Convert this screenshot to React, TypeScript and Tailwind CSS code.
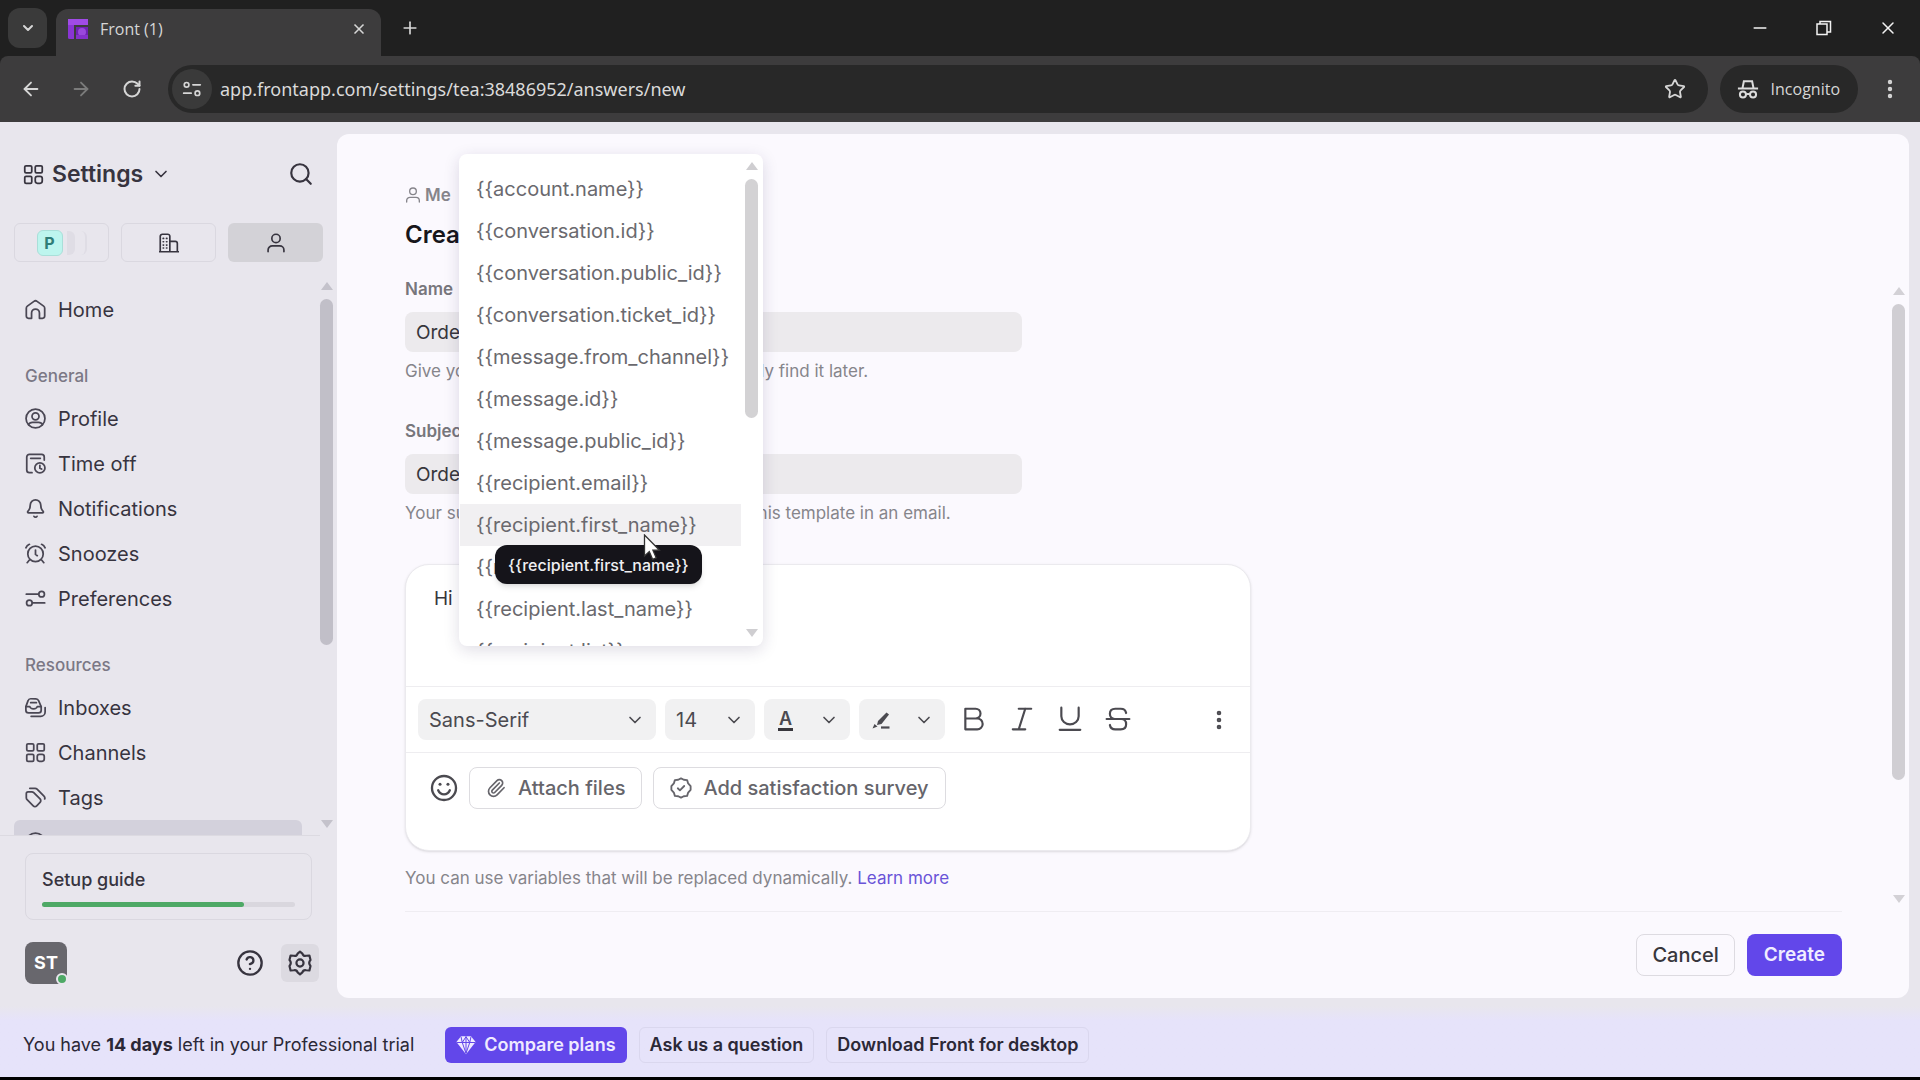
import React from 'react';
import {
  ArrowLeft,
  ArrowRight,
  Bell,
  ChevronDown,
  CircleHelp,
  EllipsisVertical,
  Minus,
  Paperclip,
  Plus,
  RotateCw,
  Search,
  Star,
  X,
} from 'lucide-react';

type IconProps = { className?: string; children?: React.ReactNode };

function Glyph({ className = 'size-6', children }: IconProps) {
  return (
    <svg
      viewBox="0 0 24 24"
      className={`shrink-0 ${className}`}
      fill="none"
      stroke="currentColor"
      strokeWidth="2"
      strokeLinecap="round"
      strokeLinejoin="round"
      aria-hidden="true"
    >
      {children}
    </svg>
  );
}

const GridIcon = ({ className }: IconProps) => (
  <Glyph className={className}>
    <rect x="2" y="2" width="8" height="8" rx="1.5" />
    <rect x="14" y="2" width="8" height="8" rx="1.5" />
    <rect x="2" y="14" width="8" height="8" rx="1.5" />
    <rect x="14" y="14" width="8" height="8" rx="2.5" />
  </Glyph>
);

const HomeIcon = () => (
  <Glyph>
    <path d="M1.500 10.500a3 3 0 0 1 1.200-2.400l7.500-5.400a3 3 0 0 1 3.600 0l7.500 5.400a3 3 0 0 1 1.200 2.400v9a2.500 2.500 0 0 1-2.500 2.500h-3.500v-6a4.500 4.500 0 0 0-9 0v6H4a2.500 2.500 0 0 1-2.500-2.500z" />
  </Glyph>
);

const PersonIcon = ({ className }: IconProps) => (
  <Glyph className={className}>
    <circle cx="12" cy="6.500" r="5" />
    <path d="M2.500 22.500v-2a5 5 0 0 1 5-5h9a5 5 0 0 1 5 5v2" />
  </Glyph>
);

const ProfileIcon = () => (
  <Glyph>
    <circle cx="12" cy="12" r="10.800" />
    <circle cx="12" cy="9.500" r="4" />
    <path d="M4 19c.8-1.700 2.500-2.500 4.500-2.500h7c2 0 3.700.8 4.500 2.500" />
  </Glyph>
);

const TimeOffIcon = () => (
  <Glyph>
    <path d="M8 22.500H5A3 3 0 0 1 2 19.500v-15a3 3 0 0 1 3-3h14a3 3 0 0 1 3 3V8" />
    <path d="M6.500 6h11" />
    <circle cx="17" cy="17" r="5.800" />
    <path d="M17 14v3.300l2 1" />
  </Glyph>
);

const AlarmIcon = () => (
  <Glyph>
    <circle cx="12" cy="12.500" r="8.800" />
    <path d="M12 8v5l2 1.500M1 5.500c.8-1.800 2.200-3.200 4-4M23 5.500c-.8-1.800-2.200-3.200-4-4M5 19.500l-2.500 3M19 19.500l2.500 3" />
  </Glyph>
);

const PreferencesIcon = () => (
  <Glyph>
    <path d="M1.500 7h13.500M9 17h13.500" />
    <circle cx="19" cy="7" r="3.200" />
    <circle cx="5" cy="17" r="3.200" />
  </Glyph>
);

const InboxesIcon = () => (
  <Glyph>
    <path d="M1 11 3.500 4.200A3.200 3.200 0 0 1 6.500 2h6a3.200 3.200 0 0 1 3 2.200L18.500 11v4a3 3 0 0 1-3 3H4a3 3 0 0 1-3-3z" />
    <path d="M1 11h4.500c.5 1.700 1.800 2.500 4.200 2.500s3.800-.8 4.300-2.500h4.500M6.500 6.500h6.500M23 12v5a5 5 0 0 1-5 5H7" />
  </Glyph>
);

const TagsIcon = () => (
  <Glyph>
    <path d="M1.500 7.500v4.700c0 .9.300 1.700.9 2.300l7 7c1.100 1.100 2.900 1.100 4 0l3.800-3.800c1.100-1.100 1.100-2.900 0-4L10 6.500c-.6-.6-1.400-.9-2.200-.9H3.500c-1.100 0-2 .8-2 1.900z" />
    <path d="M5.500 1.500h6c.9 0 1.700.3 2.300.9l7.900 7.900c.9.900 1.200 2.200.8 3.300" />
  </Glyph>
);

const BuildingIcon = ({ className }: IconProps) => (
  <Glyph className={className}>
    <path d="M1.500 22V4A2.500 2.500 0 0 1 4 1.500h6.500A2.500 2.500 0 0 1 13 4v18M.5 22.500h23M13 10h6.500a2.500 2.500 0 0 1 2.500 2.500v10" />
    <path d="M5 6.500h.5M9 6.500h.5M5 10.500h.5M9 10.500h.5M5 14.500h.5M9 14.500h.5M5 18h.5M9 18h.5" />
  </Glyph>
);

const GearIcon = ({ className }: IconProps) => (
  <Glyph className={className}>
    <path d="M9.800 3.300 12 1.500l2.200 1.800c.5 1.700 1.700 2.400 3.500 2l3-.2 1 4.200c-1.600 1.800-1.600 3.600 0 5.400l-1 4.200-3-.2c-1.800-.4-3 .3-3.500 2L12 22.500l-2.200-1.800c-.5-1.700-1.700-2.400-3.500-2l-3 .2-1-4.200c1.600-1.800 1.600-3.600 0-5.400l1-4.200 3 .2c1.800.4 3-.3 3.500-2z" />
    <circle cx="12" cy="12" r="3.300" />
  </Glyph>
);

const SmileIcon = () => (
  <Glyph className="size-7">
    <circle cx="12" cy="12" r="10.300" />
    <path d="M7 14c1 2.300 2.700 3.500 5 3.500s4-1.200 5-3.500" />
    <circle cx="8.600" cy="8.800" r="1.300" fill="currentColor" stroke="none" />
    <circle cx="15.400" cy="8.800" r="1.300" fill="currentColor" stroke="none" />
  </Glyph>
);

const SurveyIcon = () => (
  <Glyph className="size-[22px]">
    <path d="M9 3 12 1.500 15 3l3.700.4 1.100 3.600L22.500 10v4l-2.700 3-1.100 3.600-3.700.4-3 1.500L9 21l-3.700-.4L4.200 17l-2.700-3v-4l2.700-3 1.100-3.600z" />
    <path d="m8.500 12.300 2.300 2.200 4.700-4.700" />
  </Glyph>
);

const DiamondIcon = () => (
  <svg viewBox="0 0 24 24" className="size-5 shrink-0" aria-hidden="true">
    <path d="M6 1.500h12l5.500 7L12 23 .5 8.500z" fill="#efeaff" />
    <path d="M1 9h22M7.500 9 12 22l4.500-13L12 2 7.500 9 6 2M16.500 9 18 2M12 2v20" stroke="#6247ea" strokeWidth="1.200" fill="none" />
  </svg>
);

const FrontLogo = () => (
  <svg viewBox="0 0 20 20" className="size-5 shrink-0" aria-hidden="true">
    <path d="M0 0h20v6H0z" fill="#a04be6" />
    <path d="M0 6h6v14H1.500A1.500 1.500 0 0 1 0 18.500z" fill="#8a35d4" />
    <path d="M8 8h12v12H8z" fill="#6f22b4" />
    <circle cx="14" cy="13" r="4" fill="#9a48dd" />
    <path d="M8 16h12v4H8z" fill="#8531cc" />
  </svg>
);

const TuneIcon = () => (
  <Glyph className="size-5 text-[#d6d6d6]">
    <circle cx="5.500" cy="7" r="2.800" />
    <path d="M13 7h9M2 17h9" />
    <circle cx="18.500" cy="17" r="2.800" />
  </Glyph>
);

const IncognitoIcon = () => (
  <svg viewBox="0 0 24 24" className="size-[22px] shrink-0" aria-hidden="true" fill="none" stroke="#dcdcdc" strokeWidth="2.200">
    <path d="M1 11.500h22M6 11l1.500-7.500h9L18 11" />
    <circle cx="6.500" cy="18" r="3.300" />
    <circle cx="17.500" cy="18" r="3.300" />
    <path d="M10 17.500h4" />
  </svg>
);

const RestoreIcon = () => (
  <svg viewBox="0 0 16 16" className="size-4" fill="none" stroke="#f2f2f2" strokeWidth="1.500" aria-hidden="true">
    <path d="M1 4h10v10.500H1zM4 4V1.500h10.500V12H11" />
  </svg>
);

const PointerIcon = () => (
  <svg viewBox="0 0 18 28" className="h-7 w-[18px]" aria-hidden="true">
    <path d="M1.500 1v21l4.800-4.500 3.300 7.800 3.600-1.500-3.300-7.600h6.600z" fill="#fff" stroke="#333" strokeWidth="1.300" />
  </svg>
);

/** Track with two arrows and a thumb; `thumb` sizes the thumb. */
function ScrollTrack({ thumb, thumbColor, arrow, className = '' }: { thumb: string; thumbColor: string; arrow: string; className?: string }) {
  return (
    <div className={`flex w-[13px] shrink-0 flex-col items-center ${className}`} aria-hidden="true">
      <svg viewBox="0 0 12 8" className={`h-2 w-3 shrink-0 ${arrow}`}>
        <path d="M6 0l6 8H0z" fill="currentColor" />
      </svg>
      <div className="mt-[9px] flex w-full flex-1 flex-col">
        <div className={`w-full rounded-full ${thumb} ${thumbColor}`} />
      </div>
      <svg viewBox="0 0 12 8" className={`h-2 w-3 shrink-0 ${arrow}`}>
        <path d="M6 8L0 0h12z" fill="currentColor" />
      </svg>
    </div>
  );
}

function BrowserChrome() {
  return (
    <header className="shrink-0 bg-[#202020] font-['Open_Sans',sans-serif] text-[#d6d6d6]">
      <div className="flex h-14 items-end">
        <button aria-label="Search tabs" className="mb-2 ml-2 flex h-10 w-[39px] items-center justify-center rounded-xl bg-[#3a3a3a]">
          <ChevronDown className="size-4" strokeWidth={3} />
        </button>
        <div className="ml-[9px] flex h-[47px] w-[325px] items-center rounded-t-xl bg-[#3d3c3d] pr-[14px] pb-2 pl-3">
          <FrontLogo />
          <span className="ml-3 flex-1 text-base">Front (1)</span>
          <button aria-label="Close tab">
            <X className="size-4" strokeWidth={2.5} />
          </button>
        </div>
        <button aria-label="New tab" className="mb-[18px] ml-[19px]">
          <Plus className="size-5" />
        </button>
        <div className="flex-1" />
        <div className="mb-[18px] flex items-center gap-[46px] pr-[22px] text-[#f2f2f2]">
          <button aria-label="Minimize"><Minus className="size-5" strokeWidth={1.8} /></button>
          <button aria-label="Restore"><RestoreIcon /></button>
          <button aria-label="Close"><X className="size-5" strokeWidth={1.8} /></button>
        </div>
      </div>
      <div className="flex h-[66px] items-center rounded-t-lg bg-[#3d3c3d] pr-[18px] pl-5">
        <button aria-label="Back"><ArrowLeft className="size-[22px]" /></button>
        <button aria-label="Forward" className="ml-7 text-[#7b7b7b]"><ArrowRight className="size-[22px]" /></button>
        <button aria-label="Reload" className="ml-[30px]"><RotateCw className="size-5" strokeWidth={2.4} /></button>
        <div className="ml-[26px] flex h-12 flex-1 items-center rounded-full bg-[#282828] pr-[22px] pl-1">
          <button aria-label="View site information" className="flex size-10 items-center justify-center rounded-full bg-[#3a3a3a]">
            <TuneIcon />
          </button>
          <input
            aria-label="Address"
            readOnly
            value="app.frontapp.com/settings/tea:38486952/answers/new"
            className="ml-2 min-w-0 flex-1 bg-transparent font-['Noto_Sans',sans-serif] text-lg text-[#dadada] outline-none"
          />
          <button aria-label="Bookmark this tab"><Star className="size-[22px]" /></button>
        </div>
        <div className="ml-3 flex h-12 items-center gap-3 rounded-full bg-[#282828] pr-[18px] pl-[17px]">
          <IncognitoIcon />
          <span className="text-base">Incognito</span>
        </div>
        <button aria-label="Menu" className="ml-5"><EllipsisVertical className="size-6" strokeWidth={2.4} /></button>
      </div>
    </header>
  );
}

const general = [
  { label: 'Profile', icon: <ProfileIcon /> },
  { label: 'Time off', icon: <TimeOffIcon /> },
  { label: 'Notifications', icon: <Bell className="size-6 shrink-0" /> },
  { label: 'Snoozes', icon: <AlarmIcon /> },
  { label: 'Preferences', icon: <PreferencesIcon /> },
];

const resources = [
  { label: 'Inboxes', icon: <InboxesIcon /> },
  { label: 'Channels', icon: <GridIcon /> },
  { label: 'Tags', icon: <TagsIcon /> },
];

function NavLink({ label, icon, active = false }: { label: string; icon: React.ReactNode; active?: boolean }) {
  return (
    <a
      href="#"
      className={`ml-[14px] flex h-[45px] items-center gap-3 rounded-md pl-[11px] text-xl ${active ? 'mr-[18px] bg-[#d3d1dc]' : ''}`}
    >
      <span className="flex text-[#4a4754] [&_svg]:size-[21px]">{icon}</span>
      {label}
    </a>
  );
}

function Sidebar() {
  return (
    <aside className="flex w-[337px] shrink-0 flex-col text-[#37343f]">
      <div className="flex items-center px-[23px] pt-9">
        <button className="flex items-center gap-2 text-[23px] leading-8 font-semibold">
          <GridIcon className="size-[21px]" />
          <span>Settings</span>
          <ChevronDown className="size-5" />
        </button>
        <button aria-label="Search" className="ml-auto"><Search className="size-[26px]" /></button>
      </div>
      <div className="mt-[33px] grid grid-cols-3 gap-3 pr-[14px] pl-[14px]">
        <button aria-label="Workspace P" className="flex h-[39px] items-center justify-center gap-1 rounded-md border border-[#dad8e0]">
          <span className="flex size-[26px] items-center justify-center rounded-md border border-[#a9dfd9] bg-[#bdf5ee] text-base font-bold text-[#2f7d77]">P</span>
          <span className="h-6 w-2 rounded-r-md bg-[#dfdde5]" />
          <span className="h-6 w-2 rounded-r-md border-r-2 border-[#dfdde5]" />
        </button>
        <button aria-label="Company" className="flex h-[39px] items-center justify-center rounded-md border border-[#dad8e0]">
          <BuildingIcon className="size-5" />
        </button>
        <button aria-label="Personal" className="flex h-[39px] items-center justify-center rounded-md bg-[#d3d2d7]">
          <PersonIcon className="size-5" />
        </button>
      </div>
      <div className="mt-[18px] flex min-h-0 flex-1">
        <nav className="flex min-h-0 flex-1 flex-col overflow-hidden border-b border-[#dcdae1] pt-[7px] [&>*]:shrink-0">
          <NavLink label="Home" icon={<HomeIcon />} />
          <h2 className="mt-8 mb-2 pl-[25px] text-[17px] leading-6 font-medium text-[#7b7885]">General</h2>
          {general.map((item) => (
            <NavLink key={item.label} {...item} />
          ))}
          <h2 className="mt-8 mb-2 pl-[25px] text-[17px] leading-6 font-medium text-[#7b7885]">Resources</h2>
          {resources.map((item) => (
            <NavLink key={item.label} {...item} />
          ))}
          <NavLink active label="Message templates" icon={<ProfileIcon />} />
        </nav>
        <ScrollTrack className="mt-[2px] mr-1 mb-2" thumb="h-[346px]" thumbColor="bg-[#c1bfc8]" arrow="text-[#c4c2cb]" />
      </div>
      <a href="#" className="mt-[17px] mr-[25px] ml-[25px] block rounded-lg border border-[#dad8e0] px-4 pt-3 pb-3">
        <span className="block text-lg leading-7 font-medium">Setup guide</span>
        <span className="mt-2 block h-[5px] rounded-full bg-[#d9d7de]">
          <span className="block h-full w-4/5 rounded-full bg-[#4ea966]" />
        </span>
      </a>
      <div className="flex items-center pt-[22px] pr-[18px] pb-[14px] pl-[25px]">
        <button aria-label="Account ST" className="relative flex size-[42px] items-center justify-center rounded-lg bg-[#68676d] text-lg font-bold text-white">
          ST
          <span className="absolute -right-px -bottom-px size-3 rounded-full border-2 border-[#e9e7ee] bg-[#4ea966]" />
        </button>
        <button aria-label="Help" className="ml-auto"><CircleHelp className="size-7" /></button>
        <button aria-label="Settings" className="ml-[17px] flex size-[38px] items-center justify-center rounded-md bg-[#dcdae1]">
          <GearIcon className="size-[26px]" />
        </button>
      </div>
    </aside>
  );
}

const variables = [
  '{{account.name}}',
  '{{conversation.id}}',
  '{{conversation.public_id}}',
  '{{conversation.ticket_id}}',
  '{{message.from_channel}}',
  '{{message.id}}',
  '{{message.public_id}}',
  '{{recipient.email}}',
  '{{recipient.first_name}}',
  '{{recipient.handle}}',
  '{{recipient.last_name}}',
  '{{recipient.list}}',
];

function VariableMenu() {
  return (
    <div className="absolute top-5 left-[122px] z-10 flex h-[492px] w-[304px] rounded-lg bg-white shadow-[0_4px_16px_rgba(40,30,80,0.15)]">
      <div role="listbox" aria-label="Variables" className="flex flex-1 flex-col overflow-hidden pt-[14px] pl-px text-xl text-[#6a696e]">
        {variables.map((name) => (
          <button
            key={name}
            role="option"
            aria-selected={name === '{{recipient.first_name}}'}
            className="h-[42px] shrink-0 pl-4 text-left aria-selected:bg-[#f1f0f2]"
          >
            {name}
          </button>
        ))}
      </div>
      <ScrollTrack className="mt-2 mr-[5px] mb-[9px] ml-1" thumb="h-[239px]" thumbColor="bg-[#d3d2d4]" arrow="text-[#cfced1]" />
      <div role="tooltip" className="absolute top-[391px] left-[36px] flex h-[39px] items-center rounded-xl bg-[#15141a] px-[13px] text-base font-medium text-[#f0eff2] shadow-md">
        {'{{recipient.first_name}}'}
      </div>
      <div className="absolute top-[380px] left-[184px]">
        <PointerIcon />
      </div>
    </div>
  );
}

function TextField({ id, label, value, hint, className = '' }: { id: string; label: string; value: string; hint: string; className?: string }) {
  return (
    <div className={className}>
      <label htmlFor={id} className="block text-[17px] leading-6 font-semibold text-[#77767c]">{label}</label>
      <input
        id={id}
        defaultValue={value}
        className="mt-[11px] block h-10 w-[617px] max-w-full rounded-lg bg-[#eceaed] px-[11px] text-[19px] text-[#37363c] outline-none"
      />
      <p className="mt-[7px] text-[17px] leading-6 text-[#86858b]">{hint}</p>
    </div>
  );
}

const toolBox = 'flex h-[41px] items-center rounded-lg bg-[#f1f1f2]';

function Editor() {
  return (
    <div className="mt-[39px] w-[846px] max-w-full rounded-3xl border border-[#ebeaee] bg-white text-[#4b4a50] shadow-sm">
      <textarea aria-label="Message body" defaultValue="Hi " className="block h-[121px] w-full resize-none bg-transparent px-7 pt-5 text-[19px] leading-7 text-[#37363c] outline-none" />
      <div className="flex h-[67px] items-center gap-[9px] border-y border-[#eeedf0] pr-[19px] pl-3">
        <div className="relative w-[238px]">
          <select aria-label="Font" className={`${toolBox} w-full appearance-none pl-[11px] text-xl`}>
            <option>Sans-Serif</option>
          </select>
          <ChevronDown className="pointer-events-none absolute top-[11px] right-[11px] size-5" />
        </div>
        <div className="relative w-[90px]">
          <select aria-label="Font size" className={`${toolBox} w-full appearance-none pl-[11px] text-xl`}>
            <option>14</option>
          </select>
          <ChevronDown className="pointer-events-none absolute top-[11px] right-[11px] size-5" />
        </div>
        <button aria-label="Text color" className={`${toolBox} w-[86px] justify-between pr-[11px] pl-[14px]`}>
          <span className="border-b-3 border-[#37363c] px-px text-lg leading-[19px] font-semibold">A</span>
          <ChevronDown className="size-5" />
        </button>
        <button aria-label="Highlight color" className={`${toolBox} w-[86px] justify-between pr-[11px] pl-3`}>
          <svg viewBox="0 0 20 20" className="size-5" aria-hidden="true">
            <path d="M15.500 2.500l2.500 2-7.500 9.500-4.500 1L7 11z" fill="currentColor" />
            <path d="M1.500 18.500 3.500 14l3 2.500z" fill="currentColor" />
            <path d="M10 17.500h8.500" stroke="currentColor" strokeWidth="2.200" />
          </svg>
          <ChevronDown className="size-5" />
        </button>
        <div className="flex items-center gap-[22px] pb-[2px] pl-[7px]">
          <button aria-label="Bold">
            <Glyph className="size-[26px]"><path d="M4 2.500h9.500a4.500 4.500 0 0 1 0 9H4zM4 11.500h11a5 5 0 0 1 0 10H4z" /></Glyph>
          </button>
          <button aria-label="Italic">
            <Glyph className="size-[26px]"><path d="M9 2.500h11.500M3.500 21.500H15M15 2.500l-6 19" /></Glyph>
          </button>
          <button aria-label="Underline">
            <Glyph className="size-[26px]"><path d="M4 1.500v8a8 7.500 0 0 0 16 0V1.500M2.500 22h19" /></Glyph>
          </button>
          <button aria-label="Strikethrough">
            <Glyph className="size-[26px]"><path d="M1.500 12h21M19.500 6.500c-.4-2.500-2.200-4-5-4h-5c-3 0-5 1.700-5 4.700S6.500 12 9 12h6c2.500 0 4.500 1.800 4.500 4.800s-2 4.700-5 4.700h-5c-2.800 0-4.600-1.500-5-4" /></Glyph>
          </button>
        </div>
        <button aria-label="More options" className="ml-auto"><EllipsisVertical className="size-6" strokeWidth={2.6} /></button>
      </div>
      <div className="flex h-[97px] items-start gap-[11px] pt-[14px] pl-6 text-xl font-medium text-[#66656b]">
        <button aria-label="Insert emoji" className="flex h-[42px] items-center text-[#4b4a50]"><SmileIcon /></button>
        <button className="flex h-[42px] items-center gap-3 rounded-lg border border-[#dddce0] px-4"><Paperclip className="size-5" />Attach files</button>
        <button className="flex h-[42px] items-center gap-[11px] rounded-lg border border-[#dddce0] px-4"><SurveyIcon />Add satisfaction survey</button>
      </div>
    </div>
  );
}

function TemplatePage() {
  return (
    <main className="relative mt-3 mr-[11px] flex min-w-0 flex-1 flex-col rounded-xl bg-[#fbf9fe]">
      <div className="px-[68px] pt-[50px]">
        <p className="flex items-center gap-1 text-[17px] leading-[22px] font-semibold text-[#86858b]"><PersonIcon className="size-4" />Me</p>
        <h1 className="mt-[13px] text-2xl leading-8 font-semibold text-[#17161b]">Create message template</h1>
      </div>
      <div className="mt-[26px] flex min-h-0 flex-1">
        <form className="min-w-0 flex-1 pl-[68px]">
          <TextField id="template-name" label="Name" value="Order status" hint="Give your template a name so you can quickly find it later." />
          <TextField id="template-subject" label="Subject" value="Order update" className="mt-9" hint="Your subject line will appear when you use this template in an email." />
          <Editor />
          <p className="mt-[15px] text-[17px] leading-6 text-[#86858b]">
            You can use variables that will be replaced dynamically. <a href="#" className="text-[#6a54d8]">Learn more</a>
          </p>
        </form>
        <ScrollTrack className="mt-[10px] mr-1 mb-2" thumb="h-[476px]" thumbColor="bg-[#d0ced3]" arrow="text-[#d3d1d6]" />
      </div>
      <div className="mr-[67px] ml-[68px] flex justify-end gap-3 border-t border-[#efedf2] pt-[22px] pb-[22px]">
        <button className="h-[42px] rounded-lg border border-[#dddbe1] px-[15px] text-xl font-medium text-[#37363c]">Cancel</button>
        <button className="h-[42px] rounded-lg bg-[#6247ea] px-[17px] text-[19px] font-semibold text-[#f0edff]">Create</button>
      </div>
      <VariableMenu />
    </main>
  );
}

function TrialBar() {
  return (
    <footer className="mt-2 flex h-[74px] shrink-0 items-center gap-3 border-b-3 border-black bg-linear-to-b from-[#e8e6ed] to-[#e6e3fa] to-20% pt-[7px] pl-[23px] text-lg text-[#2b2836]">
      <p className="mr-[19px]">You have <strong className="font-bold">14 days</strong> left in your Professional trial</p>
      <button className="flex h-9 items-center gap-2 rounded-md bg-[#6247ea] px-[11px] font-semibold text-[#efeaff]"><DiamondIcon />Compare plans</button>
      <button className="h-9 rounded-md border border-[#dad7ee] px-[10px] font-semibold">Ask us a question</button>
      <button className="h-9 rounded-md border border-[#dad7ee] px-[10px] font-semibold">Download Front for desktop</button>
    </footer>
  );
}

export default function App() {
  return (
    <div className="flex h-screen flex-col overflow-hidden bg-[#e8e6ed] font-['Inter',sans-serif]">
      <BrowserChrome />
      <div className="flex min-h-0 flex-1">
        <Sidebar />
        <TemplatePage />
      </div>
      <TrialBar />
    </div>
  );
}
